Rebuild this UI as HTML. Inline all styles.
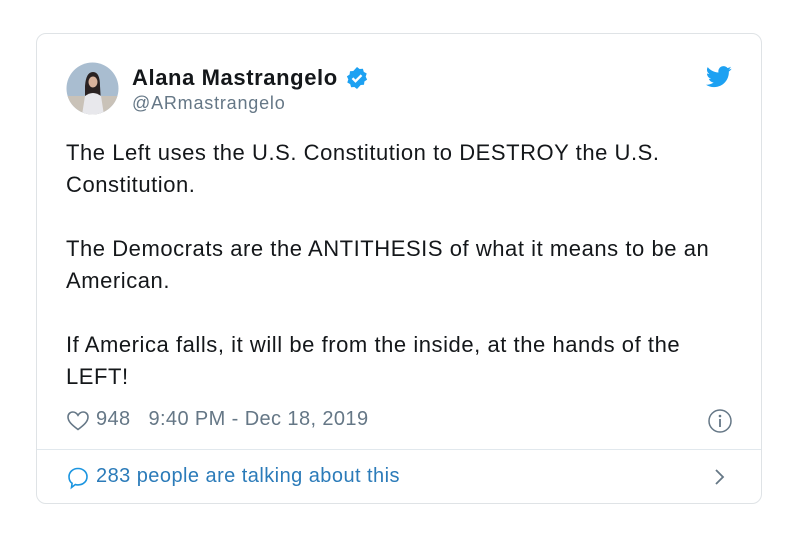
<!DOCTYPE html>
<html><head><style>
body{margin:0;width:799px;height:538px;background:#fff;font-family:"Liberation Sans",Arial,sans-serif;position:relative;overflow:hidden}
.card{position:absolute;left:36px;top:33px;width:726px;height:471px;border:1px solid #dfe3e6;border-radius:10px;box-sizing:border-box}
.abs{position:absolute;white-space:nowrap}
</style></head><body>
<div class="card"></div>
<svg class="abs" style="left:66px;top:62px" width="53" height="53" viewBox="0 0 53 53">
<defs><clipPath id="c"><circle cx="26.5" cy="26.5" r="26"/></clipPath></defs>
<g clip-path="url(#c)"><rect width="53" height="53" fill="#a9bdd0"/><rect y="34" width="53" height="19" fill="#c9c2b8"/>
<path d="M19 24 Q20 10 27 10 Q34 10 34 24 L35 40 L19 40Z" fill="#2a2222"/>
<ellipse cx="27" cy="20" rx="4.5" ry="5.5" fill="#d9b39c"/>
<path d="M16 53 L19 34 Q27 28 35 34 L38 53Z" fill="#e8e8ec"/></g></svg>
<div class="abs" style="left:132px;top:65px;font-size:22px;letter-spacing:0.6px;font-weight:bold;color:#14171a">Alana Mastrangelo</div>
<svg class="abs" style="left:345px;top:66px" width="24" height="24" viewBox="0 0 24 24"><path d="M12 1l2.6 2 3.3-.3.9 3.2 2.9 1.6-1 3.1 1.4 3-2.7 1.9-.4 3.3-3.3.2L12 23l-2.6-2-3.3.3-.9-3.2-2.9-1.6 1-3.1L1.9 10.4 4.6 8.5 5 5.2l3.3-.2z" fill="#1da1f2"/><path d="M7.5 12.2l3 3 6-6" stroke="#fff" stroke-width="2.4" fill="none"/></svg>
<div class="abs" style="left:132px;top:93px;font-size:18px;letter-spacing:0.8px;color:#657786">@ARmastrangelo</div>
<svg class="abs" style="left:706px;top:66px" width="26" height="22" viewBox="0 0 24 20"><path d="M23.6 2.4c-.9.4-1.8.6-2.8.8 1-.6 1.8-1.6 2.1-2.7-1 .6-2 1-3.1 1.2C18.9.6 17.6 0 16.2 0c-2.7 0-4.8 2.2-4.8 4.8 0 .4 0 .8.1 1.1C7.4 5.7 3.9 3.8 1.6.9c-.4.7-.7 1.6-.7 2.4 0 1.7.9 3.2 2.2 4-.8 0-1.500-.2-2.2-.6v.1c0 2.3 1.7 4.3 3.9 4.7-.4.1-.8.2-1.3.2-.3 0-.6 0-.9-.1.6 1.9 2.4 3.3 4.5 3.4-1.7 1.3-3.7 2.1-6 2.1H0c2.1 1.4 4.7 2.2 7.4 2.2 8.9 0 13.7-7.4 13.7-13.7v-.6c1-.7 1.8-1.5 2.5-2.5z" fill="#1da1f2"/></svg>
<div class="abs" style="left:66px;top:137px;font-size:22px;letter-spacing:0.55px;line-height:32px;color:#14171a;white-space:nowrap">
The Left uses the U.S. Constitution to DESTROY the U.S.<br>Constitution.<br><br>The Democrats are the ANTITHESIS of what it means to be an<br>American.<br><br>If America falls, it will be from the inside, at the hands of the<br>LEFT!</div>
<svg class="abs" style="left:66px;top:410px" width="24" height="21" viewBox="0 0 24 21"><path d="M12 19.5C6 15 2 11.5 2 7 2 4 4.2 2 6.8 2 9 2 10.8 3.4 12 5.3 13.2 3.4 15 2 17.2 2 19.8 2 22 4 22 7c0 4.5-4 8-10 12.5z" fill="none" stroke="#657786" stroke-width="1.6"/></svg>
<div class="abs" style="left:96px;top:408px;font-size:20px;letter-spacing:0.4px;color:#657786">948&nbsp;&nbsp;&nbsp;9:40 PM - Dec 18, 2019</div>
<svg class="abs" style="left:707px;top:408px" width="26" height="26" viewBox="0 0 26 26"><circle cx="13" cy="13" r="11" fill="none" stroke="#657786" stroke-width="1.5"/><circle cx="13" cy="8" r="1.3" fill="#657786"/><path d="M13 11v8" stroke="#657786" stroke-width="1.8"/></svg>
<div class="abs" style="left:37px;top:449px;width:724px;height:1px;background:#e1e8ed"></div>
<svg class="abs" style="left:66px;top:466px" width="24" height="24" viewBox="0 0 24 24"><path d="M12 2.5c5.2 0 9 3.6 9 8.2s-3.8 8.2-9 8.2c-1 0-1.9-.1-2.7-.4L5.5 21.5l.6-4.2C4 15.8 3 13.4 3 10.7 3 6.1 6.8 2.5 12 2.5z" fill="none" stroke="#1b95e0" stroke-width="1.6"/></svg>
<div class="abs" style="left:96px;top:465px;font-size:20px;letter-spacing:0.45px;color:#2b7bb9">283 people are talking about this</div>
<svg class="abs" style="left:712px;top:467px" width="14" height="20" viewBox="0 0 14 20"><path d="M4 3l7 7-7 7" fill="none" stroke="#657786" stroke-width="1.8"/></svg>
</body></html>
